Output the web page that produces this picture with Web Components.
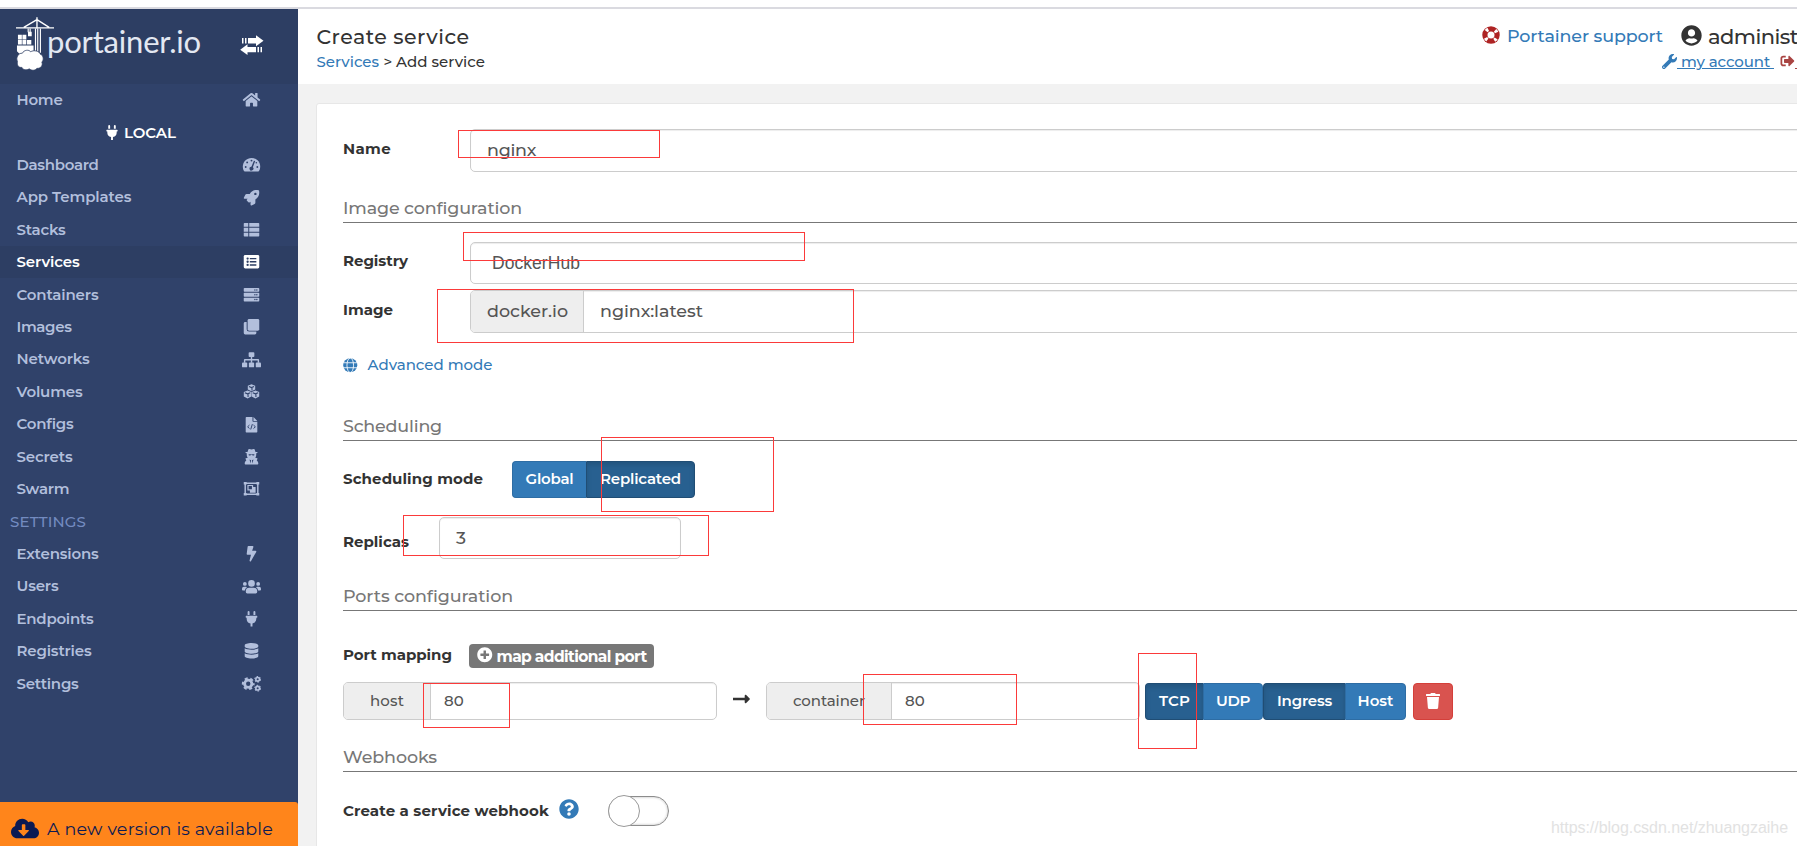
<!DOCTYPE html>
<html lang="en">
<head>
<meta charset="utf-8">
<title>Portainer</title>
<style>
  html, body { margin: 0; height: 100%; overflow: hidden; }
  body {
    font-family: Montserrat, Inter, "Liberation Sans", sans-serif;
    font-size: 15px;
    color: #333;
    background: #fff;
  }
</style>
</head>
<body>
<portainer-app></portainer-app>
<script>
  // [viewBox, markup]
  const ICONS = {
    home: ['0 0 576 512', '<path d="M280.4 148.3L96 300.1V464a16 16 0 0 0 16 16l112-.3a16 16 0 0 0 16-16V368a16 16 0 0 1 16-16h64a16 16 0 0 1 16 16v95.6a16 16 0 0 0 16 16L464 480a16 16 0 0 0 16-16V300L295.7 148.3a12.2 12.2 0 0 0-15.3 0zM571.6 251.5L488 182.6V44a12 12 0 0 0-12-12h-56a12 12 0 0 0-12 12v72.6L318.5 43a48 48 0 0 0-61 0L4.3 251.5a12 12 0 0 0-1.6 16.9l25.5 31a12 12 0 0 0 17 1.6l235.2-193.7a12.2 12.2 0 0 1 15.3 0L530.9 301a12 12 0 0 0 16.9-1.6l25.5-31a12 12 0 0 0-1.7-16.9z"/>'],
    plug: ['0 0 384 512', '<path d="M320 32a32 32 0 0 0-64 0v96h64zm48 128H16a16 16 0 0 0-16 16v32a16 16 0 0 0 16 16h16v32a160 160 0 0 0 128 156.8V512h64v-99.2A160 160 0 0 0 352 256v-32h16a16 16 0 0 0 16-16v-32a16 16 0 0 0-16-16zM128 32a32 32 0 0 0-64 0v96h64z"/>'],
    gauge: ['0 0 576 512', '<path d="M288 32C129 32 0 161 0 320c0 53 14 102 39 145 6 9 16 15 27 15h444c11 0 21-6 27-15 25-43 39-92 39-145C576 161 447 32 288 32z"/><g fill="var(--cut)"><circle cx="288" cy="118" r="31"/><circle cx="145" cy="178" r="31"/><circle cx="96" cy="330" r="31"/><circle cx="480" cy="330" r="31"/><circle cx="448" cy="190" r="26"/><path d="M368 120l42 16-78 205a64 64 0 1 1-48-19z"/></g>'],
    rocket: ['0 0 512 512', '<path d="M505.1 19.1c-1.2-5.5-6.7-11-12.2-12.2C460.7 0 435.5 0 410.4 0 307.2 0 245.3 55.2 199 128H94.8c-16.3 0-35.5 11.9-42.9 26.5L2.5 253.3A28.4 28.4 0 0 0 0 264a24 24 0 0 0 24 24h103.8l-22.5 22.5c-11.3 11.3-13 32.2 0 45.2l50.9 50.9c11.2 11.2 32.2 13.2 45.3 0l22.5-22.5V488a24 24 0 0 0 24 24c3.7 0 7.4-.9 10.7-2.5l98.7-49.4c14.7-7.3 26.5-26.5 26.5-42.9V312.8c72.6-46.3 128-108.4 128-211.1.2-25.2.2-50.4-6.8-82.6zM384 168a40 40 0 1 1 40-40 40 40 0 0 1-40 40z"/>'],
    thlist: ['0 0 512 512', '<path d="M0 56a24 24 0 0 1 24-24h125v128H0zM181 32h307a24 24 0 0 1 24 24v104H181zM0 192h149v128H0zM181 192h331v128H181zM0 352h149v128H24a24 24 0 0 1-24-24zM181 352h331v104a24 24 0 0 1-24 24H181z"/>'],
    listalt: ['0 0 512 512', '<rect y="32" width="512" height="448" rx="48"/><g fill="var(--cut)"><circle cx="128" cy="152" r="38"/><circle cx="128" cy="256" r="38"/><circle cx="128" cy="360" r="38"/><path d="M200 128h216v48H200zM200 232h216v48H200zM200 336h216v48H200z"/></g>'],
    server: ['0 0 512 512', '<rect y="32" width="512" height="128" rx="24"/><rect y="192" width="512" height="128" rx="24"/><rect y="352" width="512" height="128" rx="24"/><g fill="var(--cut)"><circle cx="368" cy="96" r="24"/><circle cx="432" cy="96" r="24"/><circle cx="368" cy="256" r="24"/><circle cx="432" cy="256" r="24"/><circle cx="368" cy="416" r="24"/><circle cx="432" cy="416" r="24"/></g>'],
    clone: ['0 0 512 512', '<rect x="128" width="384" height="384" rx="48"/><path d="M96 96H48a48 48 0 0 0-48 48v320a48 48 0 0 0 48 48h320a48 48 0 0 0 48-48v-48H176a80 80 0 0 1-80-80z"/>'],
    sitemap: ['0 0 640 512', '<rect x="224" width="192" height="160" rx="32"/><rect y="352" width="176" height="160" rx="32"/><rect x="232" y="352" width="176" height="160" rx="32"/><rect x="464" y="352" width="176" height="160" rx="32"/><path d="M296 150h48v82h200a32 32 0 0 1 32 32v90h-48v-74H344v74h-48v-74H112v74H64v-90a32 32 0 0 1 32-32h200z"/>'],
    cubes: ['0 0 512 512', '<path d="M256 8l122 46v130l-122 56-122-56V54z"/><path d="M126 214l124 52v148l-124 66L2 414V266zM386 214l124 52v148l-124 66-124-66V266z"/><path fill="none" stroke="var(--cut)" stroke-width="36" d="M172 84l84 34 84-34M272 124v90M36 288l90 38 90-38M142 332v100M296 288l90 38 90-38M402 332v100"/>'],
    filecode: ['0 0 384 512', '<path d="M24 0h200v136a24 24 0 0 0 24 24h136v328a24 24 0 0 1-24 24H24a24 24 0 0 1-24-24V24A24 24 0 0 1 24 0zM256 0l128 128H256z"/><path fill="none" stroke="var(--cut)" stroke-width="32" d="M125 266l-60 58 60 58M259 266l60 58-60 58M220 236l-54 176"/>'],
    secret: ['0 0 448 512', '<path d="M120 20C150-20 190 20 224 20s74-40 104 0l28 76h52c24 0 24 24 6 32l-34 16v64c0 30-12 60-32 84l64 14c10 4 14 12 8 24l-24 50c32 24 52 56 52 92v16c0 14-10 24-24 24H24c-14 0-24-10-24-24v-16c0-36 20-68 52-92l-24-50c-6-12-2-20 8-24l64-14c-20-24-32-54-32-84v-64l-34-16c-18-8-18-32 6-32h52z"/><g fill="var(--cut)"><path d="M130 170h188v16c0 20-12 32-34 32s-34-10-40-28h-40c-6 18-18 28-40 28s-34-12-34-32zM160 350l50 20-20 110zM288 350l-50 20 20 110z"/></g>'],
    group: ['0 0 512 512', '<path fill="none" stroke="currentColor" stroke-width="48" d="M48 72v368M464 72v368M48 72h416M48 440h416"/><path d="M0 32h96v84H0zM416 32h96v84h-96zM0 396h96v84H0zM416 396h96v84h-96z"/><path fill-rule="evenodd" d="M120 128h190v72h82v184H204v-72h-84zM160 168v104h110V168z"/>'],
    bolt: ['0 0 320 512', '<path d="M296 160H180.6l42.6-129.8C227.2 15 215.7 0 200 0H56C44 0 33.8 8.9 32.2 20.8l-32 240C-1.7 275.2 9.5 288 24 288h118.7L96.6 482.5c-3.6 15.2 8 29.5 23.3 29.5 8.4 0 16.4-4.4 20.8-12l176-304c9.3-15.9-2.2-36-20.7-36z"/>'],
    users: ['0 0 640 512', '<circle cx="96" cy="160" r="64"/><circle cx="544" cy="160" r="64"/><circle cx="320" cy="144" r="112"/><path d="M64 256h64c18 0 34 7 45 19-40 22-68 61-74 109H32a32 32 0 0 1-32-32v-32a64 64 0 0 1 64-64zM576 256h-64c-18 0-34 7-45 19 40 22 68 61 74 109h67a32 32 0 0 0 32-32v-32a64 64 0 0 0-64-64zM243 288h154a115 115 0 0 1 115 115v29a48 48 0 0 1-48 48H176a48 48 0 0 1-48-48v-29a115 115 0 0 1 115-115z"/>'],
    database: ['0 0 448 512', '<path d="M448 73v46c0 40-100 73-224 73S0 159 0 119V73C0 33 100 0 224 0s224 33 224 73zM448 176v103c0 40-100 73-224 73S0 319 0 279V176c48 33 136 48 224 48s176-15 224-48zM448 336v103c0 40-100 73-224 73S0 479 0 439V336c48 33 136 48 224 48s176-15 224-48z"/>'],
    cogs: ['0 0 640 512', '<circle cx="210" cy="256" r="122" fill="none" stroke="currentColor" stroke-width="96"/><circle cx="210" cy="256" r="180" fill="none" stroke="currentColor" stroke-width="72" stroke-dasharray="100 88.5" stroke-dashoffset="46"/><g fill="none" stroke="currentColor"><circle cx="528" cy="106" r="62" stroke-width="54"/><circle cx="528" cy="106" r="96" stroke-width="34" stroke-dasharray="54 46.5"/><circle cx="528" cy="406" r="62" stroke-width="54"/><circle cx="528" cy="406" r="96" stroke-width="34" stroke-dasharray="54 46.5"/></g>'],
    cloud: ['0 0 640 512', '<path d="M537.6 226.6c4.1-10.7 6.4-22.4 6.4-34.6 0-53-43-96-96-96-19.7 0-38.1 6-53.3 16.2C367 64.2 315.3 32 256 32c-88.4 0-160 71.6-160 160 0 2.7.1 5.4.2 8.1C40.2 219.8 0 273.2 0 336c0 79.5 64.5 144 144 144h368c70.7 0 128-57.3 128-128 0-61.9-44-113.6-102.4-125.4zm-132.9 88.7L299.3 420.7c-6.2 6.2-16.4 6.2-22.6 0L171.3 315.3c-10.1-10.1-2.9-27.3 11.3-27.3H248V176c0-8.8 7.2-16 16-16h48c8.8 0 16 7.2 16 16v112h65.4c14.2 0 21.4 17.2 11.3 27.3z"/>'],
    ring: ['0 0 512 512', '<circle cx="256" cy="256" r="248"/><circle cx="256" cy="256" r="176" fill="none" stroke="#fff" stroke-width="105" stroke-dasharray="72 204.5" stroke-dashoffset="-102"/><circle cx="256" cy="256" r="100" fill="#fff"/>'],
    user: ['0 0 496 512', '<path d="M248 8C111 8 0 119 0 256s111 248 248 248 248-111 248-248S385 8 248 8zm0 96c48.6 0 88 39.4 88 88s-39.4 88-88 88-88-39.4-88-88 39.4-88 88-88zm0 344c-58.7 0-111.3-26.6-146.5-68.2 18.8-35.4 55.6-59.8 98.5-59.8 2.4 0 4.8.4 7.1 1.1 13 4.2 26.6 6.9 40.9 6.9 14.3 0 28-2.7 40.9-6.9 2.3-.7 4.7-1.1 7.1-1.1 42.9 0 79.7 24.4 98.5 59.8C359.3 421.4 306.7 448 248 448z"/>'],
    wrench: ['0 0 512 512', '<path d="M507.7 109.1c-2.2-9-13.5-12.1-20.1-5.5l-74.4 74.4-67.9-11.3L334 98.8l74.4-74.4c6.6-6.6 3.4-17.9-5.7-20.2-47.4-11.7-99.6.9-136.6 37.900-39.6 39.7-50.5 97.1-34 147.2L18.7 402.8c-25 25-25 65.500 0 90.500s65.5 25 90.500 0l213.200-213.200c50.1 16.700 107.500 5.700 147.400-34.200 37.1-37.1 49.7-89.4 37.9-136.8zM64 472a24 24 0 1 1 0-48 24 24 0 0 1 0 48z"/>'],
    signout: ['0 0 512 512', '<path d="M497 273L329 441c-15 15-41 4.5-41-17v-96H152c-13.3 0-24-10.7-24-24v-96c0-13.3 10.7-24 24-24h136V88c0-21.4 25.9-32 41-17l168 168c9.3 9.4 9.3 24.6 0 34zM192 436v-40c0-6.6-5.4-12-12-12H96c-17.7 0-32-14.3-32-32V160c0-17.7 14.3-32 32-32h84c6.6 0 12-5.4 12-12V76c0-6.6-5.4-12-12-12H96c-53 0-96 43-96 96v192c0 53 43 96 96 96h84c6.6 0 12-5.4 12-12z"/>'],
    globe: ['0 0 512 512', '<circle cx="256" cy="256" r="248"/><g fill="none" stroke="#fff" stroke-width="30"><ellipse cx="256" cy="256" rx="116" ry="256"/><path d="M0 168h512M0 344h512"/></g>'],
    plus: ['0 0 512 512', '<path d="M256 8C119 8 8 119 8 256s111 248 248 248 248-111 248-248S393 8 256 8zm144 276c0 6.6-5.4 12-12 12h-92v92c0 6.6-5.4 12-12 12h-56c-6.6 0-12-5.4-12-12v-92h-92c-6.6 0-12-5.4-12-12v-56c0-6.6 5.4-12 12-12h92v-92c0-6.6 5.4-12 12-12h56c6.6 0 12 5.4 12 12v92h92c6.6 0 12 5.4 12 12v56z"/>'],
    question: ['0 0 512 512', '<path d="M504 256c0 137-111 248-248 248S8 393 8 256C8 119.1 119 8 256 8s248 111.1 248 248zM262.7 90c-54.5 0-89.3 23-116.6 63.8-3.5 5.3-2.4 12.4 2.7 16.3l34.7 26.3c5.2 3.9 12.6 3 16.7-2.1 17.9-22.7 30.1-35.8 57.3-35.8 20.4 0 45.7 13.1 45.7 33 0 15-12.4 22.7-32.5 34C247.1 238.5 216 254.9 216 296v4c0 6.6 5.4 12 12 12h56c6.6 0 12-5.4 12-12v-1.3c0-28.5 83.2-29.6 83.2-106.7 0-58-60.2-102-116.5-102zM256 338a46 46 0 1 0 0 92 46 46 0 0 0 0-92z"/>'],
    arrow: ['0 0 448 256', '<path d="M0 98h308V40c0-22 25-32 40-17l91 91c9 9 9 19 0 28l-91 91c-15 15-40 5-40-17v-58H0z"/>'],
    trash: ['0 0 448 512', '<path d="M32 128l28 340a48 48 0 0 0 48 44h232a48 48 0 0 0 48-44l28-340zM432 32H312l-9.4-18.7A24 24 0 0 0 281 0H166.8a23.7 23.7 0 0 0-21.4 13.3L136 32H16A16 16 0 0 0 0 48v32a16 16 0 0 0 16 16h416a16 16 0 0 0 16-16V48a16 16 0 0 0-16-16z"/>'],
    toggle: ['0 0 24 20', '<path d="M2 3h1.500v5.500H2zM5 3h1.500v5.500H5zM8 3h8V.3l7.500 5.500L16 11.200V8.500H8zM22 12h-1.500v5.200H22zM19 12h-1.500v5.200H19zM16 12H7.500V9.200L.2 14.700l7.300 5.300V17.200H16z"/>'],
    crane: ['0 0 40 54', '<g fill="none" stroke="currentColor"><path stroke-width="1.4" d="M0 11.500h39M21.500.5v12M21.500 3L8 11M21.500 3L34 11"/><path stroke-width="1.2" d="M20 12v24M22.300 12v24M25 12v25M14.500 12v5M12.500 12v4"/></g><path d="M2 18.500h4v5H2zM6.600 18.500h4v5h-4zM2 24h4v4.500H2zM6.600 24h4v4.500h-4zM11.300 24h4.400v4.500h-4.400zM12.300 15.500h3.800v4.500h-3.800zM1 29.500h17v6l-3 3H4l-3-3z"/><path stroke="var(--cut)" stroke-width=".8" d="M1.500 46c-2-4 1-9 5-8.500 1.500-3.500 7-4 8.500-1.500 3-2 9-1 10 2.500 3 1 4 6 1.500 8 1.500 3.500-1.500 7-5 6.500-1.500 2.500-6 2.500-8 .5-2.500 2-6.500 1-7.500-1.500-3 .5-5.500-2-4.500-6z"/>'],
  };

  class PtIcon extends HTMLElement {
    connectedCallback() {
      if (this.shadowRoot) return;
      const [box, markup] = ICONS[this.getAttribute('name')];
      this.attachShadow({ mode: 'open' }).innerHTML = `
        <style>
          :host { display: inline-flex; flex: none; }
          svg { width: 100%; height: 100%; fill: currentColor; overflow: visible; }
        </style>
        <svg viewBox="${box}">${markup}</svg>`;
    }
  }
  customElements.define('pt-icon', PtIcon);

  // Single line of text, tracked so that it fills the width given in "w"
  class PtText extends HTMLElement {
    connectedCallback() {
      if (this.shadowRoot) return;
      this.attachShadow({ mode: 'open' }).innerHTML = `
        <style>
          :host { display: block; flex: none; }
          span { display: inline-block; white-space: pre; }
          :host([underline]) span { text-decoration: underline; }
        </style>
        <span><slot></slot></span>`;
      const w = Number(this.getAttribute('w'));
      if (!w) return;
      const natural = this.shadowRoot.querySelector('span').getBoundingClientRect().width;
      this.style.letterSpacing = `${(w - natural) / this.textContent.length}px`;
    }
  }
  customElements.define('pt-text', PtText);

  class PtNavItem extends HTMLElement {
    connectedCallback() {
      this.attachShadow({ mode: 'open' }).innerHTML = `
        <style>
          :host {
            --cut: #30426a;
            display: flex;
            align-items: center;
            height: 32.42px;
            padding-left: 16.5px;
            color: #b2bfdc;
            font-weight: 600;
          }
          :host([active]) {
            --cut: #2d3e63;
            background: #2d3e63;
            color: #fff;
          }
          pt-text { margin-top: -1px; }
          .icon {
            display: flex;
            justify-content: center;
            width: 24px;
            margin: 0 35px 0 auto;
          }
          pt-icon { width: 19px; height: 15.5px; }
        </style>
        <pt-text w="${this.getAttribute('w')}">${this.getAttribute('label')}</pt-text>
        <div class="icon"><pt-icon name="${this.getAttribute('icon')}"></pt-icon></div>`;
    }
  }
  customElements.define('pt-nav-item', PtNavItem);

  class PtSidebar extends HTMLElement {
    connectedCallback() {
      this.attachShadow({ mode: 'open' }).innerHTML = `
        <style>
          :host {
            --cut: #30426a;
            display: flex;
            flex-direction: column;
            flex: none;
            width: 298px;
            background: #30426a;
          }
          .head {
            --cut: #2d3e63;
            display: flex;
            align-items: flex-start;
            height: 75px;
            background: #2d3e63;
            color: #fff;
          }
          .head .crane { width: 39px; height: 54px; margin: 7px 0 0 16px; }
          .head .word {
            margin: 12px 0 0 -8px;
            font: 400 31px/40px Lato, sans-serif;
            color: #e3e8f2;
          }
          .head .toggle { width: 24px; height: 20px; margin: 26px 34px 0 auto; }
          .endpoint {
            display: flex;
            align-items: center;
            height: 32.42px;
            padding-left: 105px;
            gap: 5px;
            color: #fff;
            font-weight: 600;
          }
          .endpoint pt-icon { width: 14px; height: 15px; }
          .title {
            display: flex;
            align-items: center;
            height: 32.42px;
            padding-left: 10px;
            color: #738bc0;
            font-weight: 500;
          }
          .update {
            display: flex;
            align-items: center;
            box-sizing: border-box;
            height: 44px;
            margin-top: auto;
            padding: 9px 0 0 11px;
            gap: 8px;
            border-radius: 0 3px 0 0;
            background: #ff851b;
            color: #0b1a53;
            font-size: 17.5px;
            font-weight: 450;
          }
          .update pt-icon { width: 28px; height: 23px; }
        </style>
        <div class="head">
          <pt-icon class="crane" name="crane"></pt-icon>
          <pt-text class="word" w="154">portainer.io</pt-text>
          <pt-icon class="toggle" name="toggle"></pt-icon>
        </div>
        <pt-nav-item label="Home" w="46" icon="home"></pt-nav-item>
        <div class="endpoint"><pt-icon name="plug"></pt-icon><pt-text w="52">LOCAL</pt-text></div>
        <pt-nav-item label="Dashboard" w="82" icon="gauge"></pt-nav-item>
        <pt-nav-item label="App Templates" w="115" icon="rocket"></pt-nav-item>
        <pt-nav-item label="Stacks" w="49" icon="thlist"></pt-nav-item>
        <pt-nav-item label="Services" w="63" icon="listalt" active></pt-nav-item>
        <pt-nav-item label="Containers" w="82" icon="server"></pt-nav-item>
        <pt-nav-item label="Images" w="55" icon="clone"></pt-nav-item>
        <pt-nav-item label="Networks" w="73" icon="sitemap"></pt-nav-item>
        <pt-nav-item label="Volumes" w="66" icon="cubes"></pt-nav-item>
        <pt-nav-item label="Configs" w="57" icon="filecode"></pt-nav-item>
        <pt-nav-item label="Secrets" w="56" icon="secret"></pt-nav-item>
        <pt-nav-item label="Swarm" w="53" icon="group"></pt-nav-item>
        <div class="title"><pt-text w="76">SETTINGS</pt-text></div>
        <pt-nav-item label="Extensions" w="82" icon="bolt"></pt-nav-item>
        <pt-nav-item label="Users" w="42" icon="users"></pt-nav-item>
        <pt-nav-item label="Endpoints" w="77" icon="plug"></pt-nav-item>
        <pt-nav-item label="Registries" w="75" icon="database"></pt-nav-item>
        <pt-nav-item label="Settings" w="62" icon="cogs"></pt-nav-item>
        <div class="update"><pt-icon name="cloud"></pt-icon><pt-text w="226">A new version is available</pt-text></div>`;
    }
  }
  customElements.define('pt-sidebar', PtSidebar);

  class PtHeader extends HTMLElement {
    connectedCallback() {
      this.attachShadow({ mode: 'open' }).innerHTML = `
        <style>
          :host {
            display: flex;
            justify-content: space-between;
            height: 75px;
            padding-left: 18.5px;
            background: #fff;
            font-weight: 500;
          }
          .row { display: flex; align-items: center; }
          .name { height: 30px; padding-top: 12px; font-size: 20.5px; }
          .crumbs { height: 20px; gap: 4.5px; }
          .blue { color: #337ab7; }
          .right { width: 315px; flex: none; overflow: hidden; }
          .top { height: 30px; padding-top: 12px; }
          .top .ring { width: 18px; height: 18px; margin: -2px 7px 0 0; color: #ae2323; }
          .top .support { font-size: 17.5px; padding-bottom: 2px; }
          .top .who { width: 21px; height: 21px; margin: -2px 6px 0 18px; }
          .top .admin { font-size: 21px; }
          .account { height: 20px; padding-left: 180px; }
          .account .wrench { width: 15px; height: 15px; }
          .account .out { width: 15px; height: 14px; margin-left: 6px; color: #a94442; }
          .red { color: #a94442; }
        </style>
        <div>
          <div class="row name"><pt-text w="153">Create service</pt-text></div>
          <div class="row crumbs">
            <pt-text w="62.5" class="blue">Services</pt-text>
            <pt-text w="8">&gt;</pt-text>
            <pt-text w="89">Add service</pt-text>
          </div>
        </div>
        <div class="right">
          <div class="row top">
            <pt-icon class="ring" name="ring"></pt-icon>
            <pt-text w="156" class="blue support">Portainer support</pt-text>
            <pt-icon class="who" name="user"></pt-icon>
            <pt-text class="admin" w="90">administ</pt-text>
          </div>
          <div class="row account blue">
            <pt-icon class="wrench" name="wrench"></pt-icon>
            <pt-text w="97" underline>&nbsp;my account&nbsp;</pt-text>
            <pt-icon class="out" name="signout"></pt-icon>
            <pt-text class="red" underline>&nbsp;</pt-text>
          </div>
        </div>`;
    }
  }
  customElements.define('pt-header', PtHeader);

  class PtSection extends HTMLElement {
    connectedCallback() {
      this.attachShadow({ mode: 'open' }).innerHTML = `
        <style>
          :host {
            display: block;
            height: 28px;
            border-bottom: 1px solid #777;
            color: #777;
            font-size: 17.5px;
            font-weight: 500;
            line-height: 28px;
          }
        </style>
        <pt-text w="${this.getAttribute('w')}">${this.getAttribute('label')}</pt-text>`;
    }
  }
  customElements.define('pt-section', PtSection);

  // Text field with an optional grey addon in front ("addon" slot)
  class PtInput extends HTMLElement {
    connectedCallback() {
      this.attachShadow({ mode: 'open' }).innerHTML = `
        <style>
          :host {
            display: flex;
            flex: none;
            box-sizing: border-box;
            border: 1px solid #ccc;
            border-radius: 5px;
            background: #fff;
            box-shadow: inset 0 1px 1px rgba(0, 0, 0, 0.075);
            color: #555;
            font-size: 17.5px;
            font-weight: 500;
            overflow: hidden;
          }
          :host([small]) { font-size: 15px; }
          ::slotted([slot="addon"]) {
            display: flex;
            align-items: center;
            justify-content: center;
            box-sizing: border-box;
            background: #eee;
            border-right: 1px solid #ccc;
          }
          .value { display: flex; align-items: center; padding: 0 0 var(--lift, 2px) var(--pad, 16px); }
        </style>
        <slot name="addon"></slot>
        <div class="value"><slot></slot></div>`;
    }
  }
  customElements.define('pt-input', PtInput);

  class PtButton extends HTMLElement {
    connectedCallback() {
      this.attachShadow({ mode: 'open' }).innerHTML = `
        <style>
          :host {
            display: flex;
            flex: none;
            align-items: center;
            justify-content: center;
            box-sizing: border-box;
            height: 37px;
            padding-bottom: 2px;
            border: 1px solid #2e6da4;
            background: #337ab7;
            color: #fff;
            font-weight: 600;
          }
          :host([on]) {
            background: #286090;
            border-color: #204d74;
            box-shadow: inset 0 3px 5px rgba(0, 0, 0, 0.125);
          }
          :host([first]) { border-radius: 4px 0 0 4px; border-right: 0; }
          :host([last]) { border-radius: 0 4px 4px 0; }
          :host([danger]) { border-radius: 4px; background: #d9534f; border-color: #d43f3a; }
        </style>
        <slot></slot>`;
    }
  }
  customElements.define('pt-button', PtButton);

  class PtServiceForm extends HTMLElement {
    connectedCallback() {
      this.attachShadow({ mode: 'open' }).innerHTML = `
        <style>
          :host {
            display: block;
            box-sizing: border-box;
            width: 1600px;
            height: 800px;
            margin: 19px 0 0 18px;
            padding-left: 26px;
            background: #fff;
            border: 1px solid #e7e7e7;
            border-radius: 3px;
          }
          .row { display: flex; align-items: center; }
          .label { display: flex; flex: none; font-weight: 700; color: #333; }
          .wide { width: 1400px; height: 100%; }
          .name { margin-top: 25px; height: 43px; }
          .registry { margin-top: 19px; height: 42px; }
          .image { margin-top: 6px; height: 43px; }
          .w127 { width: 127px; padding-bottom: 4px; box-sizing: border-box; }
          .advanced { margin-top: 22px; height: 20px; gap: 10px; color: #337ab7; font-weight: 500; }
          .advanced pt-icon { width: 14.5px; height: 14.5px; }
          .advanced pt-text { margin-top: -2px; }
          .mode { margin-top: 20px; height: 37px; }
          .replicas { margin-top: 19px; height: 42px; }
          .badge {
            display: flex;
            align-items: center;
            box-sizing: border-box;
            width: 185px;
            height: 24px;
            padding-left: 8px;
            gap: 4px;
            border-radius: 4px;
            background: #777;
            color: #fff;
            font-size: 15.5px;
            font-weight: 700;
          }
          .badge pt-icon { width: 15.5px; height: 15.5px; margin-top: -3px; }
          .mapping { margin-top: 33px; height: 24px; }
          .ports { margin-top: 14px; height: 38px; }
          .ports pt-input { height: 38px; }
          .ports pt-button { margin-top: 1px; }
          .ports .arrow { width: 17px; height: 10px; margin: 0 16px; transform: translateY(-2px); }
          .webhook { margin-top: 23px; height: 32px; }
          .help { width: 20px; height: 20px; margin: -4px 29px 0 10px; color: #337ab7; }
          .switch {
            display: flex;
            align-items: center;
            box-sizing: border-box;
            width: 61px;
            height: 30px;
            border: 1px solid #8c8c8c;
            border-radius: 15px;
            box-shadow: inset 0 0 2px 1px #ddd;
          }
          .knob {
            box-sizing: border-box;
            width: 32px;
            height: 32px;
            margin-left: -1px;
            flex: none;
            border: 1px solid #999;
            border-radius: 50%;
            background: #fff;
          }
        </style>
        <div class="row name">
          <div class="label w127"><pt-text w="48">Name</pt-text></div>
          <pt-input class="wide" style="--lift: 3px"><pt-text w="49">nginx</pt-text></pt-input>
        </div>
        <pt-section label="Image configuration" w="179" style="margin-top: 22px"></pt-section>
        <div class="row registry">
          <div class="label w127" style="padding-bottom: 6px"><pt-text w="65">Registry</pt-text></div>
          <pt-input class="wide" style="--pad: 21px; --lift: 0px; font-family: 'Liberation Sans', sans-serif; font-weight: 400"><pt-text w="88">DockerHub</pt-text></pt-input>
        </div>
        <div class="row image">
          <div class="label w127"><pt-text w="50">Image</pt-text></div>
          <pt-input class="wide">
            <div slot="addon" style="width: 113px; padding: 0 0 2px 1px"><pt-text w="81">docker.io</pt-text></div>
            <pt-text w="103">nginx:latest</pt-text>
          </pt-input>
        </div>
        <div class="row advanced"><pt-icon name="globe"></pt-icon><pt-text w="125">Advanced mode</pt-text></div>
        <pt-section label="Scheduling" w="99" style="margin-top: 37px"></pt-section>
        <div class="row mode">
          <div class="label" style="width: 169px; padding-bottom: 3px"><pt-text w="140">Scheduling mode</pt-text></div>
          <pt-button first style="width: 74px"><pt-text w="48">Global</pt-text></pt-button>
          <pt-button last on style="width: 109px"><pt-text w="81">Replicated</pt-text></pt-button>
        </div>
        <div class="row replicas">
          <div class="label" style="width: 96px; padding-top: 6px"><pt-text w="66">Replicas</pt-text></div>
          <pt-input style="width: 242px; height: 42px"><pt-text w="10">3</pt-text></pt-input>
        </div>
        <pt-section label="Ports configuration" w="170" style="margin-top: 23px"></pt-section>
        <div class="row mapping">
          <div class="label" style="width: 126px; padding-bottom: 4px"><pt-text w="109">Port mapping</pt-text></div>
          <div class="badge"><pt-icon name="plus"></pt-icon><pt-text w="150">map additional port</pt-text></div>
        </div>
        <div class="row ports">
          <pt-input small style="width: 374px; --pad: 13px">
            <div slot="addon" style="width: 87px; padding-bottom: 2px"><pt-text w="34">host</pt-text></div>
            <pt-text w="20">80</pt-text>
          </pt-input>
          <pt-icon class="arrow" name="arrow"></pt-icon>
          <pt-input small style="width: 374px; --pad: 13px">
            <div slot="addon" style="width: 125px; padding-bottom: 2px"><pt-text w="72">container</pt-text></div>
            <pt-text w="20">80</pt-text>
          </pt-input>
          <pt-button first on style="width: 58px; margin-left: 5px"><pt-text w="31">TCP</pt-text></pt-button>
          <pt-button last style="width: 60px"><pt-text w="34">UDP</pt-text></pt-button>
          <pt-button first on style="width: 82px"><pt-text w="55">Ingress</pt-text></pt-button>
          <pt-button last style="width: 61px"><pt-text w="36">Host</pt-text></pt-button>
          <pt-button danger style="width: 40px; margin-left: 7px"><pt-icon name="trash" style="width: 14px; height: 16px"></pt-icon></pt-button>
        </div>
        <pt-section label="Webhooks" w="94" style="margin-top: 23px"></pt-section>
        <div class="row webhook">
          <div class="label" style="padding-bottom: 2px"><pt-text w="206">Create a service webhook</pt-text></div>
          <pt-icon class="help" name="question"></pt-icon>
          <div class="switch"><div class="knob"></div></div>
        </div>`;
    }
  }
  customElements.define('pt-service-form', PtServiceForm);

  // Red outline laid over the page; box is "left top width height"
  class PtMark extends HTMLElement {
    connectedCallback() {
      const [x, y, w, h] = this.getAttribute('box').split(' ');
      this.attachShadow({ mode: 'open' }).innerHTML = `
        <style>
          :host {
            position: absolute;
            box-sizing: border-box;
            left: ${x}px;
            top: ${y}px;
            width: ${w}px;
            height: ${h}px;
            border: 1px solid #fb3a3a;
          }
        </style>`;
    }
  }
  customElements.define('pt-mark', PtMark);

  class PortainerApp extends HTMLElement {
    connectedCallback() {
      this.attachShadow({ mode: 'open' }).innerHTML = `
        <style>
          :host {
            display: flex;
            box-sizing: border-box;
            position: relative;
            height: 846px;
            padding-top: 7px;
            overflow: hidden;
          }
          .page { display: flex; flex: 1; min-width: 0; border-top: 2px solid #dadae0; }
          main { flex: 1; min-width: 0; overflow: hidden; background: #f2f2f2; }
          .source {
            position: absolute;
            right: 9px;
            bottom: 7px;
            font: 16px/22px "Liberation Sans", sans-serif;
            color: #e2e2e2;
          }
        </style>
        <div class="page">
          <pt-sidebar></pt-sidebar>
          <main>
            <pt-header></pt-header>
            <pt-service-form></pt-service-form>
          </main>
        </div>
        <pt-mark box="458 130 202 28"></pt-mark>
        <pt-mark box="463 232 342 29"></pt-mark>
        <pt-mark box="437 289 417 54"></pt-mark>
        <pt-mark box="601 437 173 75"></pt-mark>
        <pt-mark box="403 515 306 41"></pt-mark>
        <pt-mark box="423 683 87 45"></pt-mark>
        <pt-mark box="863 674 154 51"></pt-mark>
        <pt-mark box="1138 653 59 96"></pt-mark>
        <div class="source"><pt-text w="237">https://blog.csdn.net/zhuangzaihe</pt-text></div>`;
    }
  }
  customElements.define('portainer-app', PortainerApp);
</script>
</body>
</html>
